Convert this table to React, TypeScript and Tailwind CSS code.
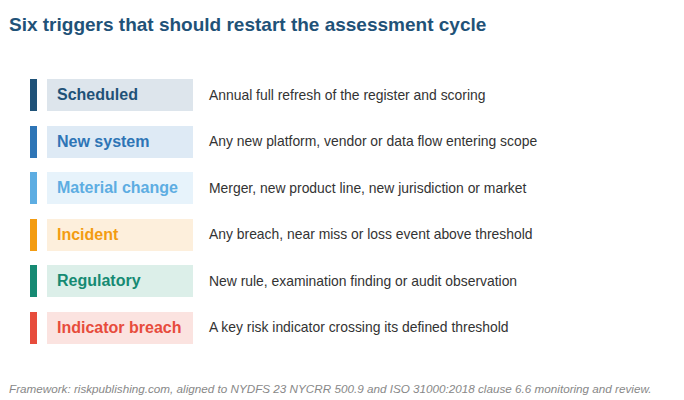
import React from "react";

const rows = [
  { label: "Scheduled", desc: "Annual full refresh of the register and scoring", bar: "bg-[#1f5278]", box: "bg-[#dde5ec]", text: "text-[#1f5278]" },
  { label: "New system", desc: "Any new platform, vendor or data flow entering scope", bar: "bg-[#2e75b6]", box: "bg-[#deeaf5]", text: "text-[#2e75b6]" },
  { label: "Material change", desc: "Merger, new product line, new jurisdiction or market", bar: "bg-[#5dade2]", box: "bg-[#e7f3fb]", text: "text-[#5dade2]" },
  { label: "Incident", desc: "Any breach, near miss or loss event above threshold", bar: "bg-[#f39c12]", box: "bg-[#fdefdc]", text: "text-[#f39c12]" },
  { label: "Regulatory", desc: "New rule, examination finding or audit observation", bar: "bg-[#168a73]", box: "bg-[#dcefe9]", text: "text-[#168a73]" },
  { label: "Indicator breach", desc: "A key risk indicator crossing its defined threshold", bar: "bg-[#e74c3c]", box: "bg-[#fbe3e0]", text: "text-[#e74c3c]" },
];

export default function App() {
  return (
    <div className="w-[684px] h-[400px] bg-white relative" style={{ fontFamily: '"Liberation Sans", Arial, sans-serif' }}>
      <h1 className="pl-[9px] pt-[13px] text-[19px] leading-[23px] font-bold text-[#1f5278]">
        Six triggers that should restart the assessment cycle
      </h1>
      <div className="mt-[43px] flex flex-col gap-[14.5px]">
        {rows.map((r) => (
          <div key={r.label} className="flex items-center h-[32px]">
            <div className={`ml-[30px] w-[7px] h-[32px] ${r.bar}`} />
            <div className={`ml-[10px] w-[146px] h-[32px] flex items-center pl-[10px] ${r.box}`}>
              <span className={`text-[16px] font-bold ${r.text}`}>{r.label}</span>
            </div>
            <div className="ml-[16px] text-[13.9px] text-[#333333]">{r.desc}</div>
          </div>
        ))}
      </div>
      <div className="absolute left-[9px] top-[382px] text-[11.7px] italic text-[#888888] leading-[14px]">
        Framework: riskpublishing.com, aligned to NYDFS 23 NYCRR 500.9 and ISO 31000:2018 clause 6.6 monitoring and review.
      </div>
    </div>
  );
}
